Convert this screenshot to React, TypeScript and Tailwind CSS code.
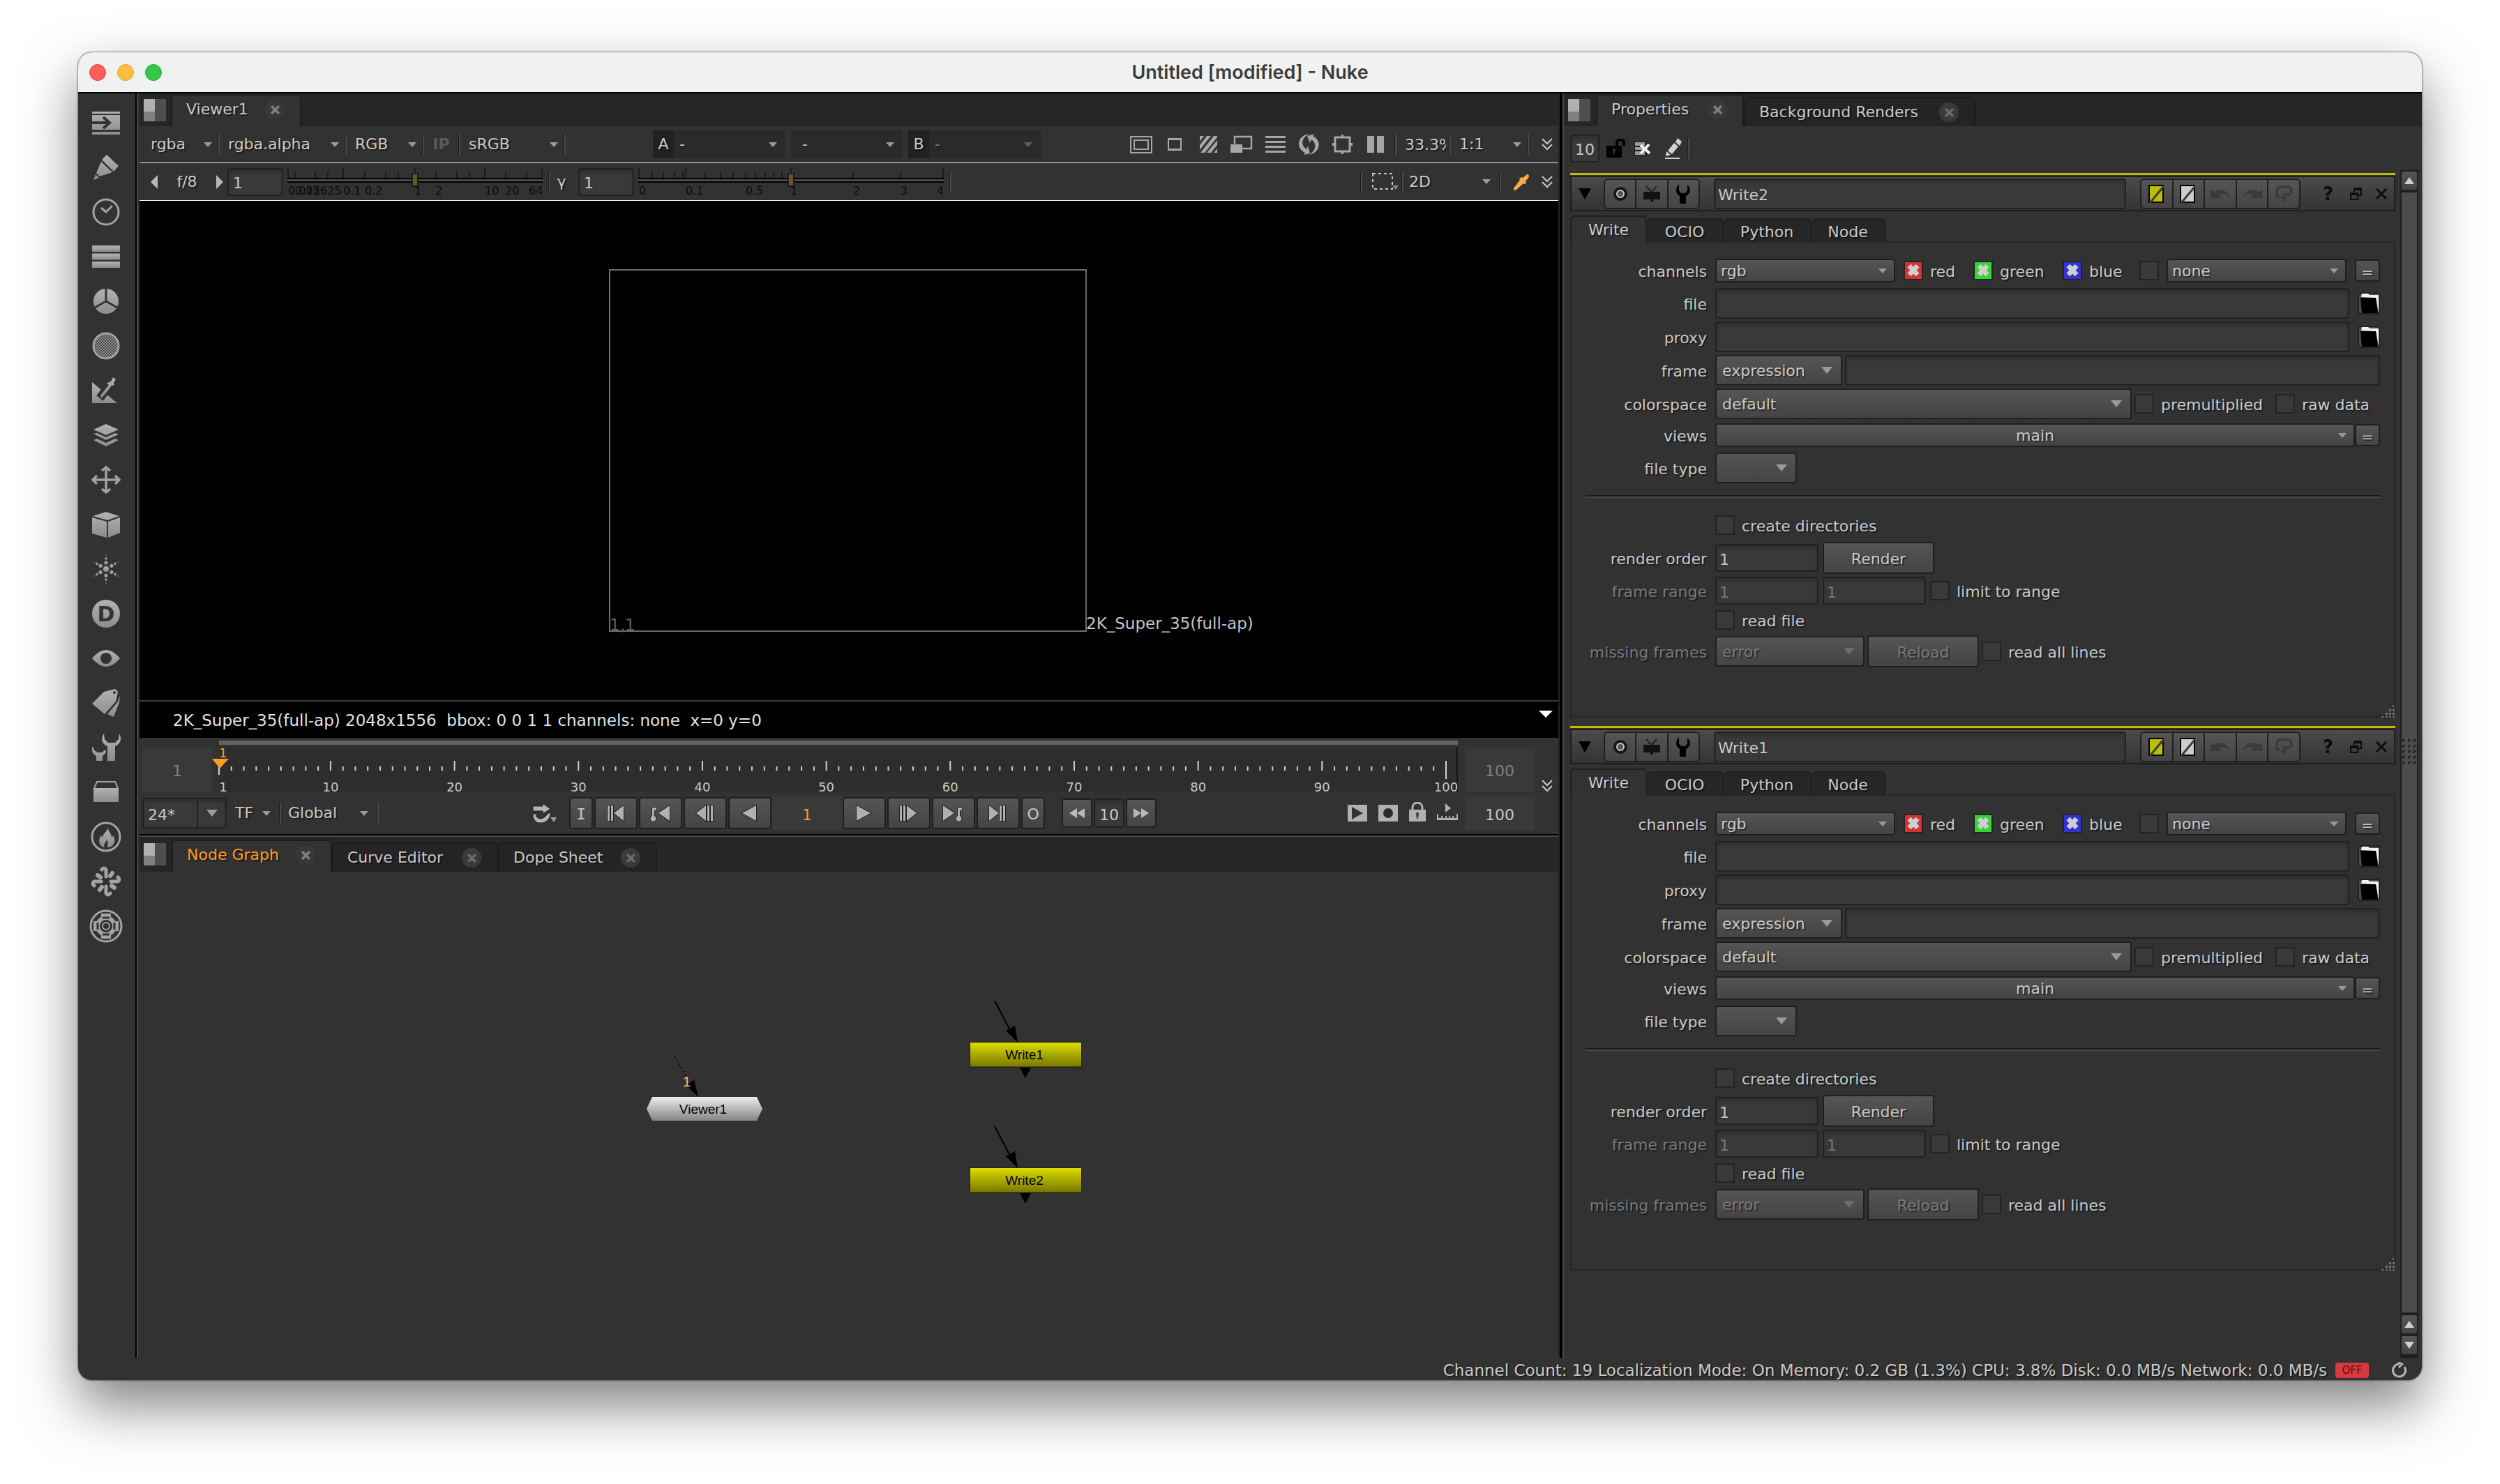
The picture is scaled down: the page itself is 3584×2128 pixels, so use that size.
import type { ReactNode } from "react";
import clsx from "clsx";

const raised = "border-2 border-[#1f1f1f] bg-linear-to-b from-[#555555] to-[#444444]";
const sunken = "border-2 border-[#212121] bg-[#393939] shadow-[inset_0_4px_4px_rgba(0,0,0,0.18)]";
const textShadow = "[text-shadow:2px_2px_1px_rgba(0,0,0,0.45)]";

/* ---------- small shared parts ---------- */

function Arrow({ className = "text-[#9a9a9a]", big }: { className?: string; big?: boolean }) {
  return (
    <svg viewBox="0 0 12 8" className={clsx(big ? "h-2.5 w-4" : "h-[7px] w-3", className)} preserveAspectRatio="none" aria-hidden="true">
      <path d="M0 0h12L6 8z" fill="currentColor" />
    </svg>
  );
}

function Sep() {
  return <div className="h-[30px] w-[3px] shrink-0 border-l border-[#1c1c1c] bg-[#484848]" />;
}

type ComboProps = {
  value: string;
  label?: string;
  id?: string;
  className?: string;
  selectClass?: string;
  arrowRight?: string;
  arrowClass?: string;
  big?: boolean;
  disabled?: boolean;
};

function Combo({
  value,
  label,
  id,
  className,
  selectClass,
  arrowRight = "right-2",
  arrowClass,
  big,
  disabled,
}: ComboProps) {
  return (
    <div className={clsx("relative flex shrink-0 items-center", className)}>
      <select
        id={id}
        aria-label={label}
        disabled={disabled}
        className={clsx("h-full w-full appearance-none bg-transparent opacity-100 outline-none", textShadow, selectClass)}
      >
        <option>{value}</option>
      </select>
      <span className={clsx("pointer-events-none absolute", arrowRight)}>
        <Arrow className={arrowClass} big={big} />
      </span>
    </div>
  );
}

function Chevrons() {
  return (
    <button aria-label="More" className="h-[22px] w-4 shrink-0 text-[#c8c8c8]">
      <svg viewBox="0 0 16 22" fill="none" stroke="currentColor" strokeWidth="2">
        <path d="M1 3l7 7 7-7M1 11l7 7 7-7" />
      </svg>
    </button>
  );
}

function PaneIcon() {
  return (
    <button aria-label="Pane menu" className="grid h-8 w-8 shrink-0 grid-cols-2">
      <span className="flex h-full flex-col">
        <span className="h-[18px] bg-[#b0b0b0]" />
        <span className="h-[14px] bg-[#808080]" />
      </span>
      <span className="h-full bg-[#4e4e4e]" />
    </button>
  );
}

function CloseMark({ active }: { active?: boolean }) {
  return (
    <span className={clsx("flex size-7 items-center justify-center rounded-full", active ? "bg-[#383838]" : "bg-[#3a3a3a]")}>
      <svg viewBox="0 0 12 12" className="size-[13px]" aria-hidden="true">
        <path d="M1 1l10 10M11 1L1 11" stroke={active ? "#7e7e7e" : "#6a6a6a"} strokeWidth="3.4" />
      </svg>
    </span>
  );
}

function PaneTab({ title, active, className }: { title: string; active?: boolean; className?: string }) {
  return (
    <button
      className={clsx(
        "flex shrink-0 items-center justify-between rounded-t-md border-x-2 border-t-2 border-[#1c1c1c] pr-[22px] pl-5",
        active ? "h-[46px] bg-[#323232] pb-1" : "h-[42px] bg-[#242424]",
        textShadow,
        className,
      )}
    >
      {title}
      <CloseMark active={active} />
    </button>
  );
}

/* ---------- left toolbar ---------- */

const tools: { name: string; art: ReactNode }[] = [
  {
    name: "Image",
    art: (
      <>
        <path d="M0 4h40v3H0zM0 9h40v21H0zM0 33h40v4H0z" />
        <path d="M0 20h24M16 12l9 8-9 8" fill="none" stroke="#323232" strokeWidth="4" />
      </>
    ),
  },
  {
    name: "Draw",
    art: <path d="M21 2l17 16-7 8L14 9zM13 12l16 15-18 6-5-5zM5 30l5 5-8 3z" />,
  },
  {
    name: "Time",
    art: (
      <>
        <circle cx="20" cy="20" r="18" fill="none" stroke="#a3a3a3" strokeWidth="3" />
        <path d="M13 14l7 6 9-9" fill="none" stroke="#a3a3a3" strokeWidth="3" />
      </>
    ),
  },
  {
    name: "Channel",
    art: (
      <>
        <rect y="4" width="40" height="9" rx="1" />
        <rect y="15.500" width="40" height="9" rx="1" />
        <rect y="27" width="40" height="9" rx="1" />
      </>
    ),
  },
  {
    name: "Color",
    art: (
      <>
        <circle cx="20" cy="20" r="18" />
        <path d="M20 1v20M20 20L4 29M20 20l16 9" fill="none" stroke="#323232" strokeWidth="3" />
      </>
    ),
  },
  {
    name: "Filter",
    art: <circle cx="20" cy="20" r="18" fill="url(#mesh)" stroke="#a3a3a3" strokeWidth="3" />,
  },
  {
    name: "Keyer",
    art: (
      <>
        <path d="M0 8l36 30H0z" />
        <path d="M11 31L30 6" stroke="#323232" strokeWidth="12" />
        <path d="M30 1l4 3-3 5 1 3-4 1-11 14-4 4-1-4L24 12l-3-2 3-2 3-1z" />
      </>
    ),
  },
  {
    name: "Merge",
    art: <path d="M20 4l18 8-18 8-18-8zM2 18l5-1 13 6 13-6 5 2-18 8zM2 27l5-2 13 6 13-6 5 2-18 9z" />,
  },
  {
    name: "Transform",
    art: (
      <path
        d="M20 3v34M3 20h34M14 7l6-5 6 5M14 33l6 5 6-5M7 14l-6 6 6 6M33 14l6 6-6 6"
        fill="none"
        stroke="#a3a3a3"
        strokeWidth="3.400"
      />
    ),
  },
  {
    name: "3D",
    art: <path d="M20 2l19 6-17 6L1 8zM0 10l21 6v23L0 33zM23 16l17-6v22l-17 7z" />,
  },
  {
    name: "Particles",
    art: (
      <>
        <circle cx="20" cy="20" r="4" />
        {[0, 60, 120, 180, 240, 300].map((angle) => (
          <g key={angle} transform={`rotate(${angle} 20 20)`}>
            <circle cx="20" cy="11" r="2.600" />
            <circle cx="20" cy="5" r="1.800" />
            <circle cx="20" cy="0" r="1" opacity="0.6" />
          </g>
        ))}
      </>
    ),
  },
  {
    name: "Deep",
    art: (
      <>
        <circle cx="20" cy="20" r="20" />
        <text x="20" y="31" textAnchor="middle" fontSize="30" fontWeight="700" fill="#323232">
          D
        </text>
      </>
    ),
  },
  {
    name: "Views",
    art: (
      <>
        <path d="M0 20Q20-4 40 20 20 44 0 20z" />
        <circle cx="20" cy="20" r="8" fill="#323232" />
      </>
    ),
  },
  {
    name: "MetaData",
    art: (
      <>
        <path d="M0 21L17 4l16-4 4 4-3 14-16 18zM22 36l15-18 3-8-1 9-8 21z" />
        <circle cx="32" cy="5" r="2" fill="#323232" />
      </>
    ),
  },
  {
    name: "ToolSets",
    art: (
      <>
        <path d="M17 0c-5 7-3 15 5 18v21h11V18c8-3 10-11 6-18l-1 8-5 5h-10l-5-5z" />
        <path d="M1 18c-3 7 1 12 5 14v7h9v-7l5-5-1-4-5 4H8l-5-3z" />
      </>
    ),
  },
  {
    name: "Other",
    art: (
      <>
        <path d="M2 14h36v20H2z" />
        <path d="M3 14l4-9h26l4 9" fill="none" stroke="#a3a3a3" strokeWidth="2" />
      </>
    ),
  },
  {
    name: "FurnaceCore",
    art: (
      <>
        <circle cx="20" cy="20" r="20" fill="none" stroke="#a3a3a3" strokeWidth="3" />
        <path d="M22 6c1 7-8 9-7 16l-2-4c-6 8-1 17 5 17-3-4 2-6 3-11 3 4 1 7 1 11 9 0 13-9 8-17l-2 4c1-6-5-9-6-16z" />
      </>
    ),
  },
  {
    name: "Splash",
    art: (
      <g fill="none" stroke="#a3a3a3" strokeLinecap="round">
        {[0, 90, 180, 270].map((angle) => (
          <g key={angle} transform={`rotate(${angle} 20 20)`}>
            <path d="M20 13V3q-3-4-6 0" strokeWidth="5" />
            <path d="M26 12l3-4" strokeWidth="6" />
          </g>
        ))}
      </g>
    ),
  },
  {
    name: "CaraVR",
    art: (
      <g fill="none" stroke="#a3a3a3">
        <circle cx="20" cy="20" r="22" strokeWidth="3" />
        <circle cx="20" cy="20" r="12" strokeWidth="6" />
        <circle cx="20" cy="20" r="5" strokeWidth="2" />
        <path d="M20 2v6M20 32v6M2 20h6M32 20h6" strokeWidth="14" />
        <path d="M15 8h10M15 32h10M8 15v10M32 15v10" stroke="#323232" strokeWidth="3" />
      </g>
    ),
  },
];

function Toolbar() {
  return (
    <nav className="flex w-[82px] shrink-0 flex-col items-center pt-2.5 pr-0.5">
      <svg className="absolute size-0" aria-hidden="true">
        <defs>
          <linearGradient id="steel" x1="0" y1="0" x2="0" y2="1">
            <stop offset="0" stopColor="#b2b2b2" />
            <stop offset="1" stopColor="#8c8c8c" />
          </linearGradient>
          <pattern id="mesh" width="4" height="4" patternUnits="userSpaceOnUse">
            <rect width="4" height="4" fill="#4a4a4a" />
            <path d="M0 0h2v2H0zM2 2h2v2H2z" fill="#8f8f8f" />
          </pattern>
        </defs>
      </svg>
      {tools.map((tool) => (
        <button key={tool.name} aria-label={tool.name} className="flex h-16 w-full items-center justify-center">
          <svg viewBox="0 0 40 40" fill="url(#steel)" className="size-10 overflow-visible">
            {tool.art}
          </svg>
        </button>
      ))}
    </nav>
  );
}

/* ---------- viewer ---------- */

type Scale = { ticks: number[]; tall: number[]; labels: [number, string][]; width: number; value: number };

const gainScale: Scale = {
  width: 366,
  value: 50,
  ticks: [1, 11, 40, 58, 80, 111, 141, 159, 183, 213, 243, 261, 283, 313, 343, 365],
  tall: [1, 80, 183, 283, 365],
  labels: [
    [1, "0.015625"],
    [11, "0.02"],
    [80, "0.1"],
    [111, "0.2"],
    [182, "1"],
    [212, "2"],
    [283, "10"],
    [312, "20"],
    [346, "64"],
  ],
};

const gammaScale: Scale = {
  width: 438,
  value: 50,
  ticks: [1, 20, 36, 52, 64, 68, 96, 118, 136, 154, 168, 182, 194, 206, 219, 308, 376, 437],
  tall: [1, 68, 219, 437],
  labels: [
    [1, "0"],
    [68, "0.1"],
    [154, "0.5"],
    [218, "1"],
    [308, "2"],
    [376, "3"],
    [428, "4"],
  ],
};

function ScaleSlider({ scale, label }: { scale: Scale; label: string }) {
  return (
    <div className="flex h-10 flex-col" style={{ width: scale.width }}>
      <svg className="h-3.5 w-full" aria-hidden="true">
        {scale.ticks.map((x) => (
          <path key={x} d={`M${x} ${scale.tall.includes(x) ? 0 : 5}V14`} stroke="#1c1c1c" strokeWidth="2" />
        ))}
      </svg>
      <input
        type="range"
        aria-label={label}
        defaultValue={scale.value}
        className="h-[7px] w-full appearance-none border-y-2 border-black bg-[#4b4b4b] outline-none [&::-webkit-slider-thumb]:h-5 [&::-webkit-slider-thumb]:w-2.5 [&::-webkit-slider-thumb]:appearance-none [&::-webkit-slider-thumb]:border-2 [&::-webkit-slider-thumb]:border-[#1c1c1c] [&::-webkit-slider-thumb]:bg-[#6a5622]"
      />
      <svg className="h-[19px] w-full overflow-visible text-[16px]" aria-hidden="true">
        {scale.labels.map(([x, text]) => (
          <text key={text} x={x} y="17" fill="#0b0b0b">
            {text}
          </text>
        ))}
      </svg>
    </div>
  );
}

const viewerTools: { name: string; art: ReactNode }[] = [
  {
    name: "Clip to format",
    art: (
      <g fill="none" stroke="currentColor" strokeWidth="2">
        <path d="M1 5h30v23H1z" />
        <path d="M6 10h20v13H6z" />
      </g>
    ),
  },
  { name: "Proxy", art: <path d="M6 7h20v18H6zM8 10v12h16V10z" fillRule="evenodd" /> },
  {
    name: "Overscan",
    art: <path d="M4 4h6l-6 8zM14 4h6L4 24v-7zM24 4h5v2L11 28H5zM29 10v7L20 28h-6zM29 22v6h-5z" />,
  },
  {
    name: "Wipe",
    art: (
      <>
        <path d="M6 5h24v17H6z" fill="none" stroke="currentColor" strokeWidth="2.400" />
        <path d="M0 16h17v12H0z" />
      </>
    ),
  },
  { name: "Scanlines", art: <path d="M2 4h29v3H2zM2 11h29v3H2zM2 18h29v3H2zM2 25h29v3H2z" /> },
  {
    name: "Refresh",
    art: (
      <path d="M17 1C2 2-5 20 11 28l-2 3 9-2-3-11-2 5C3 16 7 6 17 1zM16 31c15-1 21-20 6-27l2-3-10 3 4 10 2-5c9 6 6 17-4 22z" />
    ),
  },
  {
    name: "Region of interest",
    art: (
      <>
        <path d="M6 6h21v20H6z" fill="none" stroke="currentColor" strokeWidth="3" />
        <path d="M15 2h3v4h-3zM15 26h3v4h-3zM2 14h4v4H2zM27 14h4v4h-4z" />
      </>
    ),
  },
  { name: "Pause", art: <path d="M4 4h10v24H4zM18 4h10v24H18z" /> },
];

function ViewerControls() {
  return (
    <>
      <div className="flex h-[52px] items-center">
        <Combo label="Channels" value="rgba" className="h-10 w-28" selectClass="pl-4" />
        <Sep />
        <Combo label="Alpha channel" value="rgba.alpha" className="h-10 w-[179px]" selectClass="pl-3" />
        <Sep />
        <Combo label="Display channel" value="RGB" className="h-10 w-[108px]" selectClass="pl-3" />
        <Sep />
        <button className="w-[49px] font-bold text-[#5a5a5a]">IP</button>
        <Sep />
        <Combo label="Viewer process" value="sRGB" className="h-10 w-[148px]" selectClass="pl-3" />
        <Sep />
        <div className="ml-[125px] flex h-10 gap-2">
          <label className="flex bg-[#2a2a2a]">
            <span className={clsx("flex w-[30px] items-center justify-center bg-[#212121]", textShadow)}>A</span>
            <Combo value="-" className="w-40" selectClass="pl-2" arrowRight="right-3" />
          </label>
          <Combo label="Wipe mode" value="-" className="w-40 bg-[#2a2a2a]" selectClass="pl-4" arrowRight="right-3" />
          <label className="flex bg-[#2a2a2a]">
            <span className={clsx("flex w-[30px] items-center justify-center bg-[#212121]", textShadow)}>B</span>
            <Combo
              value="-"
              className="w-40"
              selectClass="pl-2 text-[#777777]"
              arrowRight="right-3"
              arrowClass="text-[#606060]"
            />
          </label>
        </div>
        <div className="ml-auto flex items-center pr-2">
          {viewerTools.map((tool) => (
            <button key={tool.name} aria-label={tool.name} className="flex w-12 justify-center text-[#a6a6a6]">
              <svg viewBox="0 0 32 32" fill="currentColor" className="size-8">
                {tool.art}
              </svg>
            </button>
          ))}
          <div className="flex items-center pl-[3px]">
            <Sep />
            <input
              aria-label="Zoom"
              defaultValue="33.3%"
              className={clsx("h-10 w-[75px] bg-transparent pr-1 pl-3 outline-none", textShadow)}
            />
            <Sep />
            <Combo label="Proxy scale" value="1:1" className="h-10 w-[109px]" selectClass="pl-3" />
            <Sep />
            <div className="w-[18px]" />
            <Chevrons />
          </div>
        </div>
      </div>
      <div className="flex h-[55px] items-center border-y border-[#f0f0f0]">
        <button aria-label="Gain down" className="ml-4 w-2.5 text-[#b8b8b8]">
          <svg viewBox="0 0 10 20" fill="currentColor">
            <path d="M10 0v20L0 10z" />
          </svg>
        </button>
        <button className={clsx("w-[84px]", textShadow)}>f/8</button>
        <button aria-label="Gain up" className="w-2.5 text-[#b8b8b8]">
          <svg viewBox="0 0 10 20" fill="currentColor">
            <path d="M0 0v20l10-10z" />
          </svg>
        </button>
        <input aria-label="Gain" defaultValue="1" className={clsx("mr-1.5 ml-1.5 h-10 w-20 rounded pt-1 pl-1.5", sunken)} />
        <ScaleSlider scale={gainScale} label="Gain slider" />
        <div className="w-2" />
        <Sep />
        <button className={clsx("w-10 pr-2", textShadow)}>γ</button>
        <input aria-label="Gamma" defaultValue="1" className={clsx("mr-1.5 h-10 w-20 rounded pt-1 pl-1.5", sunken)} />
        <ScaleSlider scale={gammaScale} label="Gamma slider" />
        <div className="w-2" />
        <Sep />
        <div className="ml-auto flex items-center pr-2">
          <Sep />
          <button aria-label="Selection mode" className="flex w-14 items-end justify-end pr-1 text-[#c8c8c8]">
            <svg viewBox="0 0 38 26" fill="none" className="h-[26px] w-[38px]">
              <path d="M1 1h28v22H1z" stroke="currentColor" strokeWidth="2" strokeDasharray="4 4" />
              <path d="M29 18h9l-4 6z" fill="#8a8a8a" />
            </svg>
          </button>
          <Sep />
          <Combo label="View" value="2D" className="h-10 w-[137px]" selectClass="pl-2" arrowRight="right-3" />
          <Sep />
          <button aria-label="Pick color" className="flex w-[58px] justify-center text-[#ffa940]">
            <svg viewBox="0 0 24 24" fill="currentColor" className="size-6">
              <path d="M20 1c3 0 4 3 2 5l-4 5 1 3-3 1-1-1L5 23l-4 1v-3L10 9 9 7l3-2 2 1z" />
            </svg>
          </button>
          <Chevrons />
        </div>
      </div>
    </>
  );
}

function ViewerCanvas() {
  return (
    <div className="relative h-[716px] bg-black text-[23px] text-[#c4c4c4]">
      <div className="absolute top-[98px] left-[673px] h-[520px] w-[685px] border-2 border-[#6c6c6c]" />
      <span className="absolute top-[595px] left-[674px] text-[#5c5c5c]">1,1</span>
      <span className="absolute top-[593px] left-[1357px]">2K_Super_35(full-ap)</span>
    </div>
  );
}

/* ---------- timeline ---------- */

const frames = Array.from({ length: 100 }, (_, index) => index + 1);
const isMajor = (frame: number) => frame % 10 === 0 || frame === 1;

function frameX(frame: number) {
  return `${((frame - 1) / 99) * 100}%`;
}

function Timeline() {
  return (
    <div className="grid grid-cols-[100px_1fr_100px] gap-x-2.5 pt-1">
      <div className="col-start-2 mb-1 h-1.5 bg-[#646464]" />
      <div className="col-start-1 flex h-16 items-center justify-center bg-[#393939] pt-1 text-[#808080]">1</div>
      <div className="border-r-2 border-[#161616] bg-[#2d2d2d] pr-[15px]">
        <svg className="h-16 w-full overflow-visible text-[18px]" aria-label="Frame ruler">
          {frames.map((frame) => (
            <line
              key={frame}
              x1={frameX(frame)}
              x2={frameX(frame)}
              y1={isMajor(frame) ? 19 : 27}
              y2={frame === 100 ? 45 : frame === 1 ? 39 : 33}
              stroke="#d2d2d2"
              strokeWidth="2"
            />
          ))}
          {frames.filter(isMajor).map((frame) => (
            <text
              key={frame}
              x={frameX(frame)}
              y="63"
              dx={frame === 1 ? 6 : 0}
              textAnchor="middle"
              fill="#c8c8c8"
            >
              {frame}
            </text>
          ))}
          <text x="0" y="14" fill="#ff9a26">
            1
          </text>
          <path d="M-10 16h24L1 30z" fill="#ff9a26" />
        </svg>
      </div>
      <div className="flex h-16 items-center justify-center bg-[#393939] pt-1 text-[#808080]">100</div>
    </div>
  );
}

type KeyProps = { label: string; art: ReactNode };

const backKeys: KeyProps[] = [
  { label: "First frame", art: <path d="M8 5h3v22H8zM13 5h3v22h-3zM31 5v22L17 16z" /> },
  {
    label: "Previous key",
    art: (
      <>
        <path d="M33 5v22L17 16z" />
        <path d="M9 8h5v4h-3v8a4 4 0 11-3 0V8z" />
      </>
    ),
  },
  { label: "Step back", art: <path d="M21 5v22L7 16zM23 5h3v22h-3zM28 5h3v22h-3z" /> },
  { label: "Play backward", art: <path d="M29 5v22L9 16z" /> },
];

const forwardKeys: KeyProps[] = [
  { label: "Play forward", art: <path d="M9 5v22l20-11z" /> },
  { label: "Step forward", art: <path d="M7 5h3v22H7zM12 5h3v22h-3zM17 5v22l14-11z" /> },
  {
    label: "Next key",
    art: (
      <>
        <path d="M5 5v22l16-11z" />
        <path d="M27 8h5v4h-3v8a4 4 0 11-3 0V8z" />
      </>
    ),
  },
  { label: "Last frame", art: <path d="M7 5v22l14-11zM22 5h3v22h-3zM27 5h3v22h-3z" /> },
];

function TransportKey({ label, art }: KeyProps) {
  return (
    <button aria-label={label} className={clsx("flex h-[46px] w-[62px] items-center justify-center rounded", raised)}>
      <svg viewBox="0 0 40 32" className="h-8 w-10" fill="#b0b0b0" stroke="#222222" strokeWidth="2" paintOrder="stroke">
        {art}
      </svg>
    </button>
  );
}

function Transport() {
  return (
    <div className="flex h-[60px] items-center">
      <div className={clsx("relative flex h-11 w-[121px] items-center rounded", sunken)}>
        <input
          aria-label="Frame rate"
          defaultValue="24*"
          className="h-full w-[78px] border-r-2 border-[#212121] bg-transparent pt-1 pl-1.5"
        />
        <button aria-label="Frame rate presets" className="flex h-full flex-1 items-center justify-center">
          <Arrow big />
        </button>
      </div>
      <Combo label="Timecode" value="TF" className="h-10 w-[75px]" selectClass="pl-3" arrowRight="right-3" />
      <Sep />
      <Combo label="Frame range" value="Global" className="h-10 w-[137px]" selectClass="pl-2.5" arrowRight="right-3" />
      <Sep />
      <div className="flex-[4]" />
      <button aria-label="Playback mode" className="mr-[18px] w-9">
        <svg viewBox="0 0 36 30" fill="#b4b4b4" stroke="#202020" strokeWidth="1">
          <path d="M2 5h14V1l11 8-11 7v-4H2z" />
          <path d="M2 16h7l-3 3q8 10 18-4h4q-4 16-18 14Q5 28 3 22l-1 2z" />
          <path d="M27 21h9l-4 7z" stroke="none" fill="#9a9a9a" />
        </svg>
      </button>
      <div className="flex items-center gap-0.5">
        <button className={clsx("h-[46px] w-[34px] rounded pt-1 font-['DejaVu_Sans_Mono',monospace]", raised)}>I</button>
        {backKeys.map((item) => (
          <TransportKey key={item.label} {...item} />
        ))}
      </div>
      <input
        aria-label="Current frame"
        defaultValue="1"
        className="h-12 w-[102px] bg-[#393939] pt-1 text-center text-[#ff9a26] outline-none"
      />
      <div className="flex items-center gap-0.5">
        {forwardKeys.map((item) => (
          <TransportKey key={item.label} {...item} />
        ))}
        <button className={clsx("h-[46px] w-[34px] rounded pt-1", raised)}>O</button>
      </div>
      <div className="ml-6 flex items-center gap-0.5">
        <button aria-label="Skip back" className={clsx("flex h-[42px] w-11 items-center justify-center rounded", raised)}>
          <svg viewBox="0 0 24 14" className="h-3.5 w-6" fill="#b8b8b8">
            <path d="M12 0v14L1 7zM23 0v14L12 7z" />
          </svg>
        </button>
        <input
          aria-label="Frame increment"
          defaultValue="10"
          className={clsx("h-[42px] w-11 rounded pt-1 text-center", sunken)}
        />
        <button aria-label="Skip forward" className={clsx("flex h-[42px] w-11 items-center justify-center rounded", raised)}>
          <svg viewBox="0 0 24 14" className="h-3.5 w-6" fill="#b8b8b8">
            <path d="M1 0v14l11-7zM12 0v14l11-7z" />
          </svg>
        </button>
      </div>
      <div className="flex-[5]" />
      <div className="flex items-center gap-4">
        <button aria-label="Flipbook" className="w-7">
          <svg viewBox="0 0 28 24" fill="#b0b0b0">
            <path d="M0 0h28v24H0zM6 3v18l16-9z" fillRule="evenodd" />
          </svg>
        </button>
        <button aria-label="Capture" className="w-7">
          <svg viewBox="0 0 28 24" fill="#b0b0b0">
            <path d="M0 0h28v24H0z" />
            <circle cx="14" cy="12" r="7" fill="#2c2c2c" />
          </svg>
        </button>
        <button aria-label="Lock range" className="w-6 pb-1">
          <svg viewBox="0 0 24 28" fill="#b0b0b0">
            <path d="M0 11h24v17H0z" />
            <path d="M5 12V8a7 7 0 0114 0v4" fill="none" stroke="#b0b0b0" strokeWidth="3" />
            <path d="M10 15h4v4l-1 5h-2l-1-5z" fill="#4a4a4a" />
          </svg>
        </button>
        <button aria-label="Audio" className="mr-2.5 w-[30px] pb-1">
          <svg viewBox="0 0 30 24" fill="#b0b0b0">
            <path d="M12 0l8 7-8 6zM0 15h2v6h26v-6h2v9H0zM6 18h2v4H6zM12 18h2v4h-2zM17 18h2v4h-2zM22 18h2v4h-2z" />
          </svg>
        </button>
      </div>
      <input
        aria-label="Last frame"
        defaultValue="100"
        className="h-12 w-[100px] bg-[#393939] pt-1 text-center outline-none"
      />
    </div>
  );
}

/* ---------- node graph ---------- */

function GraphNode({ name, kind, className }: { name: string; kind: "write" | "viewer"; className: string }) {
  const viewer = kind === "viewer";
  return (
    <div className={clsx("absolute font-['Liberation_Sans',Arial,sans-serif] text-[19px] leading-9 text-black", className)}>
      <svg viewBox="0 0 60 62" className="absolute bottom-[34px] left-[34px] h-[62px] w-[60px] overflow-visible">
        {viewer ? (
          <g transform="translate(6 0)">
            <path d="M0 4l18 30" stroke="#000" strokeWidth="1.500" strokeDasharray="2 4" />
            <path d="M34 62L17 46l11-9z" />
            <text x="12" y="47" fontSize="20" fill="#ffb868">
              1
            </text>
          </g>
        ) : (
          <>
            <path d="M1 1l23 44" stroke="#000" strokeWidth="2" />
            <path d="M34 61L17 44l13-7z" />
          </>
        )}
      </svg>
      {viewer ? (
        <div className="h-[34px] w-[166px] bg-linear-to-b from-[#eeeeee] to-[#868686] pr-1 text-center [clip-path:polygon(8px_0,calc(100%-8px)_0,100%_50%,calc(100%-8px)_100%,8px_100%,0_50%)]">
          {name}
        </div>
      ) : (
        <div className="h-[35px] w-[159px] border-b border-[#4a4a00] bg-linear-to-b from-[#dede00] to-[#7a7a00] pr-1 text-center outline outline-[#222222]">
          {name}
        </div>
      )}
      {!viewer && (
        <svg viewBox="0 0 16 15" className="absolute top-9 left-[71px] h-[15px] w-4">
          <path d="M0 0h16L8 15z" />
        </svg>
      )}
    </div>
  );
}

/* ---------- properties ---------- */

function Check({ id, tone, text, className }: { id: string; tone?: string; text?: string; className?: string }) {
  return (
    <div className={clsx("flex h-7 shrink-0 items-center gap-2.5", className)}>
      <span className="relative flex size-7 shrink-0">
        <input
          id={id}
          type="checkbox"
          aria-label={text ? undefined : "extra channel"}
          defaultChecked={Boolean(tone)}
          className={clsx("size-7 appearance-none border-2 border-[#232323]", tone ?? "bg-[#393939]")}
        />
        {tone && (
          <svg viewBox="0 0 28 28" className="pointer-events-none absolute inset-0">
            <path d="M8 7l12 13M20 7L8 20" stroke="#cfcfcf" strokeWidth="7" />
          </svg>
        )}
      </span>
      {text && (
        <label htmlFor={id} className={clsx("pt-1", textShadow)}>
          {text}
        </label>
      )}
    </div>
  );
}

function Row({
  label,
  htmlFor,
  dim,
  className,
  children,
}: {
  label?: string;
  htmlFor?: string;
  dim?: boolean;
  className?: string;
  children: ReactNode;
}) {
  return (
    <div className={clsx("flex items-center", className)}>
      <label
        htmlFor={htmlFor}
        className={clsx("mr-3 w-[174px] shrink-0 pt-1 text-right whitespace-nowrap", textShadow, dim && "text-[#787878]")}
      >
        {label}
      </label>
      {children}
    </div>
  );
}

function FolderButton({ label }: { label: string }) {
  return (
    <button aria-label={label} className="ml-3 flex h-8 w-8 shrink-0 overflow-hidden rounded border-2 border-[#222222] bg-[#4a4a4a]">
      <svg viewBox="0 0 28 28" className="size-7">
        <path d="M4 0h9l2 2h13v26L24 6 3 5z" fill="#f2f2f2" />
        <path d="M2 6h22l3 22H4z" fill="#000" />
      </svg>
    </button>
  );
}

function EqualButton() {
  return (
    <button className={clsx("h-8 w-9 shrink-0 rounded pt-1 text-[20px] leading-6", raised, textShadow)}>=</button>
  );
}

const nodeTabs = [
  { title: "Write", className: "w-[110px]" },
  { title: "OCIO", className: "w-[110px]" },
  { title: "Python", className: "w-[126px]" },
  { title: "Node", className: "w-[106px]" },
];

const headerKeys: { label: string; art: ReactNode }[] = [
  {
    label: "Node color",
    art: (
      <>
        <path d="M5 4h20v24H5z" fill="#bebe00" stroke="#000" strokeWidth="2" />
        <path d="M6 29L26 5" stroke="#3c3c3c" strokeWidth="3" />
      </>
    ),
  },
  {
    label: "Interface color",
    art: (
      <>
        <path d="M5 4h20v24H5z" fill="#cccccc" stroke="#000" strokeWidth="2" />
        <path d="M6 29L26 5" stroke="#3c3c3c" strokeWidth="3" />
      </>
    ),
  },
  { label: "Undo", art: <path d="M2 10l5 3c9-6 19-3 23 9-5-6-11-7-16-4l4 4H2z" fill="#3b3b3b" /> },
  { label: "Redo", art: <path d="M30 10l-5 3C16 7 6 10 2 22c5-6 11-7 16-4l-4 4h16z" fill="#3b3b3b" /> },
  {
    label: "Revert",
    art: (
      <>
        <path d="M11 20H6V10l3-4h15l3 4v4l-3 3h-7v4" fill="none" stroke="#3b3b3b" strokeWidth="3.500" />
        <path d="M11 20h10l-4 8z" fill="#3b3b3b" />
      </>
    ),
  },
];

function PanelHeader({ name }: { name: string }) {
  return (
    <div className="mt-px flex h-[51px] items-center border-2 border-[#1e1e1e] bg-linear-to-b from-[#4b4b4b] to-[#343434]">
      <button aria-label="Collapse" className="ml-2.5 w-[18px]">
        <svg viewBox="0 0 18 16">
          <path d="M0 0h18L9 16z" />
        </svg>
      </button>
      <div className={clsx("ml-[18px] flex h-11 w-[138px] divide-x-2 divide-[#1f1f1f] rounded-md", raised)}>
        <button aria-label="Center node" className="flex flex-1 items-center justify-center">
          <svg viewBox="0 0 22 22" className="size-[22px]">
            <circle cx="11" cy="11" r="10" fill="#161616" />
            <circle cx="11" cy="11" r="5" fill="#555555" stroke="#c8c8c8" strokeWidth="2" />
          </svg>
        </button>
        <button aria-label="Hide controls" className="flex flex-1 items-center justify-center">
          <svg viewBox="0 0 26 24" className="h-6 w-[26px]">
            <path d="M5 1l7 8M20 1l-7 8" stroke="#222222" strokeWidth="2" />
            <path d="M1 9h24v11H15v3h-4v-3H1z" fill="#111111" />
          </svg>
        </button>
        <button aria-label="Edit knobs" className="flex flex-1 items-center justify-center">
          <svg viewBox="0 0 22 28" className="h-7 w-[22px]">
            <path d="M5 0C-1 6 0 14 6 17v11h9V17c7-4 8-11 2-16v8l-3 4H8L5 9z" />
          </svg>
        </button>
      </div>
      <input
        aria-label="Node name"
        defaultValue={name}
        className={clsx("ml-5 h-11 min-w-0 flex-1 rounded pt-1 pl-1", sunken)}
      />
      <div className={clsx("ml-5 flex h-11 w-[230px] divide-x-2 divide-[#1f1f1f] rounded-md", raised)}>
        {headerKeys.map((item) => (
          <button key={item.label} aria-label={item.label} className="flex flex-1 items-center justify-center">
            <svg viewBox="0 0 32 32" className="size-8">
              {item.art}
            </svg>
          </button>
        ))}
      </div>
      <div className="flex w-[134px] items-center justify-end gap-5 pr-2.5 text-[#0c0c0c]">
        <button className="mr-1 text-[26px] font-bold">?</button>
        <button aria-label="Float" className="w-[17px]">
          <svg viewBox="0 0 17 18" fill="none" stroke="currentColor">
            <path d="M6 6V2h10v9h-4" strokeWidth="2" />
            <path d="M6 2h10M1 9h10" strokeWidth="4" />
            <path d="M1 8h10v9H1z" strokeWidth="2" />
          </svg>
        </button>
        <button aria-label="Close" className="w-4">
          <svg viewBox="0 0 16 16" fill="none" stroke="currentColor" strokeWidth="3">
            <path d="M1 1l14 14M15 1L1 15" />
          </svg>
        </button>
      </div>
    </div>
  );
}

function WritePanel({ name }: { name: string }) {
  const key = (field: string) => `${name}-${field}`;
  const choice = clsx("rounded", raised);
  const box = clsx("h-11 min-w-0 flex-1 rounded", sunken);

  return (
    <section className="relative mb-3">
      <div className="h-[3px] bg-[#bebe00]" />
      <PanelHeader name={name} />
      <div className="mt-1.5 flex h-[37px] items-end">
        {nodeTabs.map((tab, index) => (
          <button
            key={tab.title}
            className={clsx(
              "relative rounded-t-md border-x-2 border-t-2 border-[#1f1f1f]",
              index === 0 ? "-mb-0.5 h-[39px] bg-[#323232]" : "h-[33px] border-l-0 bg-[#262626] pt-1",
              textShadow,
              tab.className,
            )}
          >
            {tab.title}
          </button>
        ))}
      </div>
      <div className="border-2 border-b-[3px] border-[#272727] px-5 pt-[23px] pb-[69px]">
        <Row label="channels" htmlFor={key("channels")} className="mb-2 h-[34px]">
          <Combo
            id={key("channels")}
            value="rgb"
            className={clsx("h-[34px] w-[258px]", choice)}
            selectClass="pt-0.5 pl-1.5"
            arrowRight="right-2.5"
          />
          <Check id={key("red")} tone="bg-[#d43333]" text="red" className="ml-3 w-[100px]" />
          <Check id={key("green")} tone="bg-[#33d433]" text="green" className="w-32" />
          <Check id={key("blue")} tone="bg-[#3333d4]" text="blue" className="w-[110px]" />
          <Check id={key("extra")} />
          <Combo
            label="extra channels"
            value="none"
            className={clsx("ml-[11px] h-[34px] min-w-0 flex-1", choice)}
            selectClass="pt-0.5 pl-1.5"
            arrowRight="right-2.5"
          />
          <div className="w-3" />
          <EqualButton />
        </Row>
        <Row label="file" htmlFor={key("file")} className="mb-1">
          <input id={key("file")} className={box} />
          <FolderButton label="Browse file" />
        </Row>
        <Row label="proxy" htmlFor={key("proxy")} className="mb-1">
          <input id={key("proxy")} className={box} />
          <FolderButton label="Browse proxy" />
        </Row>
        <Row label="frame" htmlFor={key("frame")} className="mb-1">
          <Combo
            id={key("frame")}
            value="expression"
            className={clsx("h-11 w-[182px]", choice)}
            selectClass="pt-0.5 pl-2"
            arrowRight="right-3"
            big
          />
          <input aria-label="Frame expression" className={clsx("ml-1", box)} />
        </Row>
        <Row label="colorspace" htmlFor={key("colorspace")} className="mb-1.5">
          <Combo
            id={key("colorspace")}
            value="default"
            className={clsx("h-11 min-w-0 flex-1", choice)}
            selectClass="pt-0.5 pl-2"
            arrowRight="right-3"
            big
          />
          <Check id={key("premult")} text="premultiplied" className="ml-1 w-[202px]" />
          <Check id={key("raw")} text="raw data" className="w-[150px]" />
        </Row>
        <Row label="views" htmlFor={key("views")} className="mb-2 h-[34px]">
          <Combo
            id={key("views")}
            value="main"
            className={clsx("h-[34px] min-w-0 flex-1", choice)}
            selectClass="pt-0.5 [text-align-last:center]"
            arrowRight="right-2.5"
          />
          <EqualButton />
        </Row>
        <Row label="file type" htmlFor={key("type")} className="mb-[17px]">
          <Combo id={key("type")} value="" className={clsx("h-11 w-[117px]", choice)} arrowRight="right-3" big />
        </Row>
        <div className="mb-[25px] h-1 border-t-2 border-[#1a1a1a] bg-[#4a4a4a]" />
        <Row className="mb-2.5">
          <Check id={key("dirs")} text="create directories" />
        </Row>
        <Row label="render order" htmlFor={key("order")} className="mb-1">
          <input id={key("order")} defaultValue="1" className={clsx("h-10 w-[148px] rounded pt-1 pl-1", sunken)} />
          <button className={clsx("ml-1.5 h-[46px] w-40 rounded pt-1", raised, textShadow)}>Render</button>
        </Row>
        <Row label="frame range" htmlFor={key("first")} dim className="mb-2">
          <input
            id={key("first")}
            disabled
            defaultValue="1"
            className={clsx("h-10 w-[148px] rounded pt-1 pl-1 text-[#787878]", sunken)}
          />
          <input
            aria-label="Last frame"
            disabled
            defaultValue="1"
            className={clsx("ml-1.5 h-10 w-[148px] rounded pt-1 pl-1 text-[#787878]", sunken)}
          />
          <Check id={key("limit")} text="limit to range" className="ml-1.5" />
        </Row>
        <Row className="mb-2">
          <Check id={key("read")} text="read file" />
        </Row>
        <Row label="missing frames" htmlFor={key("missing")} dim>
          <Combo
            id={key("missing")}
            value="error"
            disabled
            className={clsx("h-11 w-[214px]", choice)}
            selectClass="pt-0.5 pl-2 text-[#787878]"
            arrowRight="right-3"
            arrowClass="text-[#6c6c6c]"
            big
          />
          <button disabled className={clsx("ml-1 h-[46px] w-40 rounded pt-1 text-[#787878]", raised, textShadow)}>
            Reload
          </button>
          <Check id={key("lines")} text="read all lines" className="ml-1" />
        </Row>
      </div>
      <svg viewBox="0 0 20 20" className="absolute right-0 -bottom-0.5 size-5" aria-hidden="true">
        <path
          d="M16 0h2v3h-2zM11 6h3v3h-3zM16 6h3v3h-3zM6 11h3v3H6zM11 11h3v3h-3zM16 11h3v3h-3zM0 16h3v2H0zM6 16h3v2H6zM11 16h3v2h-3zM16 16h3v2h-3z"
          fill="#757575"
        />
      </svg>
    </section>
  );
}

function ScrollButton({ label, down }: { label: string; down?: boolean }) {
  return (
    <button
      aria-label={label}
      className={clsx("flex h-[30px] w-full shrink-0 items-center justify-center rounded-sm", raised)}
    >
      <svg viewBox="0 0 14 10" className={clsx("h-2.5 w-3.5", down && "rotate-180")} fill="#cfcfcf">
        <path d="M7 0l7 10H0z" />
      </svg>
    </button>
  );
}

function Properties() {
  return (
    <div className="flex w-[1230px] shrink-0 flex-col">
      <div className="flex h-[47px] items-end bg-[#262626] pl-1.5">
        <div className="mr-2 self-center">
          <PaneIcon />
        </div>
        <PaneTab title="Properties" active className="w-[212px]" />
        <PaneTab title="Background Renders" className="w-[332px]" />
      </div>
      <div className="flex h-[63px] items-center pl-[9px]">
        <input
          aria-label="Max panels"
          defaultValue="10"
          className={clsx("h-10 w-[42px] rounded pt-1 text-center", sunken)}
        />
        <button aria-label="Lock panels" className="ml-2.5 w-7">
          <svg viewBox="0 0 28 28">
            <path d="M0 10h22v17H0z" />
            <path d="M15 11V6a5 5 0 0110 0v4" fill="none" stroke="#000" strokeWidth="4" />
            <path d="M11 14v8M9 16h4" stroke="#333333" strokeWidth="2" />
          </svg>
        </button>
        <button aria-label="Clear panels" className="ml-3 w-6">
          <svg viewBox="0 0 24 20">
            <path d="M0 0h18v20H0z" fill="#1c1c1c" />
            <path d="M1 1h14v5H1zM1 8h14v4H1zM1 14h14v5H1z" fill="#9c9c9c" />
            <path d="M9 5l13 12M21 4L9 17" stroke="#efefef" strokeWidth="4" />
          </svg>
        </button>
        <button aria-label="Edit" className="mr-2 ml-5 w-6">
          <svg viewBox="0 0 24 32" fill="#d2d2d2">
            <path d="M18 1l6 5-3 6-6-5zM13 8l6 5-9 11-6-5zM2 20l6 5-7 2z" />
            <path d="M0 29h21v2H0z" />
          </svg>
        </button>
        <Sep />
      </div>
      <div className="flex flex-1 gap-[7px] pr-[5px] pl-[9px]">
        <div className="min-w-0 flex-1 pt-1">
          <WritePanel name="Write2" />
          <WritePanel name="Write1" />
        </div>
        <div className="flex w-[26px] flex-col bg-[#1f1f1f] pb-[3px]">
          <ScrollButton label="Scroll up" />
          <div className={clsx("flex flex-1 items-center justify-center", raised, "bg-none bg-[#4c4c4c]")}>
            <svg viewBox="0 0 22 38" className="h-[38px] w-[22px]" aria-hidden="true">
              {[0, 8, 16, 24, 32].map((y) => (
                <path key={y} d={`M1 ${y}h4v2h-2v2h-2zM9 ${y}h4v2h-2v2h-2zM17 ${y}h4v2h-2v2h-2z`} fill="#222222" />
              ))}
            </svg>
          </div>
          <ScrollButton label="Scroll up" />
          <ScrollButton label="Scroll down" down />
        </div>
      </div>
    </div>
  );
}

/* ---------- window ---------- */

export default function App() {
  return (
    <div className="flex min-h-screen bg-white px-28 pt-[75px] pb-[149px] font-['DejaVu_Sans',Verdana,sans-serif] text-[22px] leading-[26px] text-[#c8c8c8]">
      <div className="flex flex-1 flex-col overflow-hidden rounded-[20px] bg-[#323232] shadow-[0_0_2px_1px_rgba(0,0,0,0.4),0_36px_80px_rgba(0,0,0,0.5)]">
        <header className="relative flex h-[59px] items-center gap-4 border-b-2 border-black bg-[#eff2f1] pl-4">
          <button aria-label="Close window" className="size-6 rounded-full border border-[#e0443e] bg-[#ff5f5a]" />
          <button aria-label="Minimize window" className="size-6 rounded-full border border-[#dea035] bg-[#ffbe40]" />
          <button aria-label="Zoom window" className="size-6 rounded-full border border-[#25a838] bg-[#34c84a]" />
          <h1 className="absolute inset-x-0 text-center font-['Inter',sans-serif] text-[27px] leading-8 font-semibold text-[#3c3c3c]">
            Untitled [modified] - Nuke
          </h1>
        </header>
        <div className="flex flex-1">
          <Toolbar />
          <div className="w-1.5 shrink-0 border-l-2 border-black bg-[#323232] shadow-[inset_2px_0_0_#4a4a4a]" />
          <main className="flex min-w-0 flex-1 flex-col">
            <div className="flex h-[47px] items-end bg-[#262626] pl-1.5">
              <div className="mr-[7px] self-center">
                <PaneIcon />
              </div>
              <PaneTab title="Viewer1" active className="w-[187px]" />
            </div>
            <ViewerControls />
            <ViewerCanvas />
            <div className="flex h-[54px] items-center border-t-2 border-[#3a3a3a] bg-black pr-2 pl-12 text-[23px] text-[#e2e2e2]">
              <span className="pt-0.5 whitespace-pre">
                {"2K_Super_35(full-ap) 2048x1556  bbox: 0 0 1 1 channels: none  x=0 y=0"}
              </span>
              <button aria-label="Collapse info" className="mb-4 ml-auto w-5">
                <svg viewBox="0 0 20 10" fill="#ffffff">
                  <path d="M0 0h20L10 10z" />
                </svg>
              </button>
            </div>
            <div className="flex items-center pr-2 pl-1">
              <div className="min-w-0 flex-1">
                <Timeline />
                <Transport />
              </div>
              <div className="ml-2.5 flex">
                <Chevrons />
              </div>
            </div>
            <div className="h-1 border-t-2 border-black bg-[#4a4a4a]" />
            <div className="flex h-[50px] items-end bg-[#262626] pl-1.5">
              <div className="mr-2 self-center">
                <PaneIcon />
              </div>
              <PaneTab title="Node Graph" active className="w-[230px] text-[#ff9a26]" />
              <PaneTab title="Curve Editor" className="w-[238px]" />
              <PaneTab title="Dope Sheet" className="w-[228px]" />
            </div>
            <div className="relative flex-1">
              <GraphNode kind="viewer" name="Viewer1" className="top-[323px] left-[727px]" />
              <GraphNode kind="write" name="Write1" className="top-[245px] left-[1191px]" />
              <GraphNode kind="write" name="Write2" className="top-[425px] left-[1191px]" />
            </div>
          </main>
          <div className="w-2 shrink-0 border-x-2 border-[#262626] border-r-[#4a4a4a] bg-black" />
          <Properties />
        </div>
        <footer className="flex h-8 items-center justify-end pt-1 pr-5">
          <span className={clsx("text-[23px]", textShadow)}>
            Channel Count: 19 Localization Mode: On Memory: 0.2 GB (1.3%) CPU: 3.8% Disk: 0.0 MB/s Network: 0.0 MB/s
          </span>
          <span className="ml-3 flex h-[22px] w-12 items-center justify-center rounded bg-[#d63a3e] text-[15px] leading-5 text-[#5a0e10]">
            OFF
          </span>
          <button aria-label="Refresh" className="ml-8 w-6">
            <svg viewBox="0 0 24 24" fill="none" stroke="#b4b4b4" strokeWidth="3">
              <path d="M19 7a9 9 0 11-7-4" />
              <path d="M10 0l6 3-5 5" strokeWidth="2.500" />
            </svg>
          </button>
        </footer>
      </div>
    </div>
  );
}
